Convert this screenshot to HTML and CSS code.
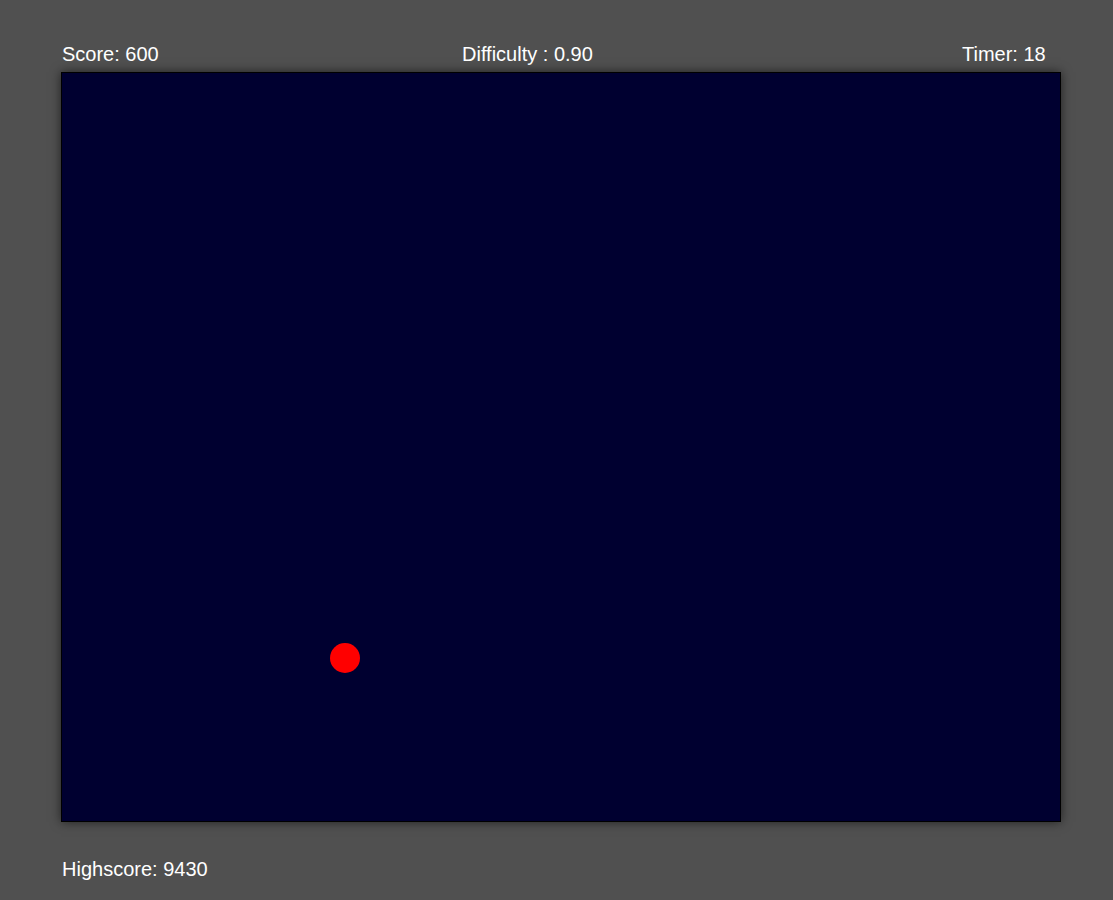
FILE: index.html
```html
<!DOCTYPE html>
<html>
<head>
<meta charset="utf-8">
<link rel="stylesheet" href="styles.css">
</head>
<body>
<div class="game">
  <div class="hud">
    <span class="score">Score: 600</span>
    <span class="difficulty">Difficulty : 0.90</span>
    <span class="timer">Timer: 18</span>
  </div>
  <div class="board">
    <div class="ball"></div>
  </div>
  <div class="highscore">Highscore: 9430</div>
</div>
</body>
</html>
```

FILE: styles.css
```css
html, body {
  margin: 0;
  padding: 0;
  background: #505050;
  height: 100%;
}
body {
  font-family: "Liberation Sans", Arial, sans-serif;
  font-size: 20px;
  color: #ffffff;
}
.game {
  width: 1000px;
  margin-left: 61px;
  padding-top: 43px;
}
.hud {
  display: grid;
  grid-template-columns: 400px 500px auto;
  padding-left: 1px;
  height: 23px;
  line-height: 23px;
  margin-bottom: 6px;
}
.board {
  position: relative;
  box-sizing: border-box;
  width: 1000px;
  height: 750px;
  background: #000030;
  border: 1px solid #000000;
  box-shadow: 0 0 10px rgba(0, 0, 0, 0.6);
}
.ball {
  position: absolute;
  left: 268px;
  top: 570px;
  width: 30px;
  height: 30px;
  border-radius: 50%;
  background: #ff0000;
}
.highscore {
  margin-top: 36px;
  padding-left: 1px;
  line-height: 23px;
}
```
